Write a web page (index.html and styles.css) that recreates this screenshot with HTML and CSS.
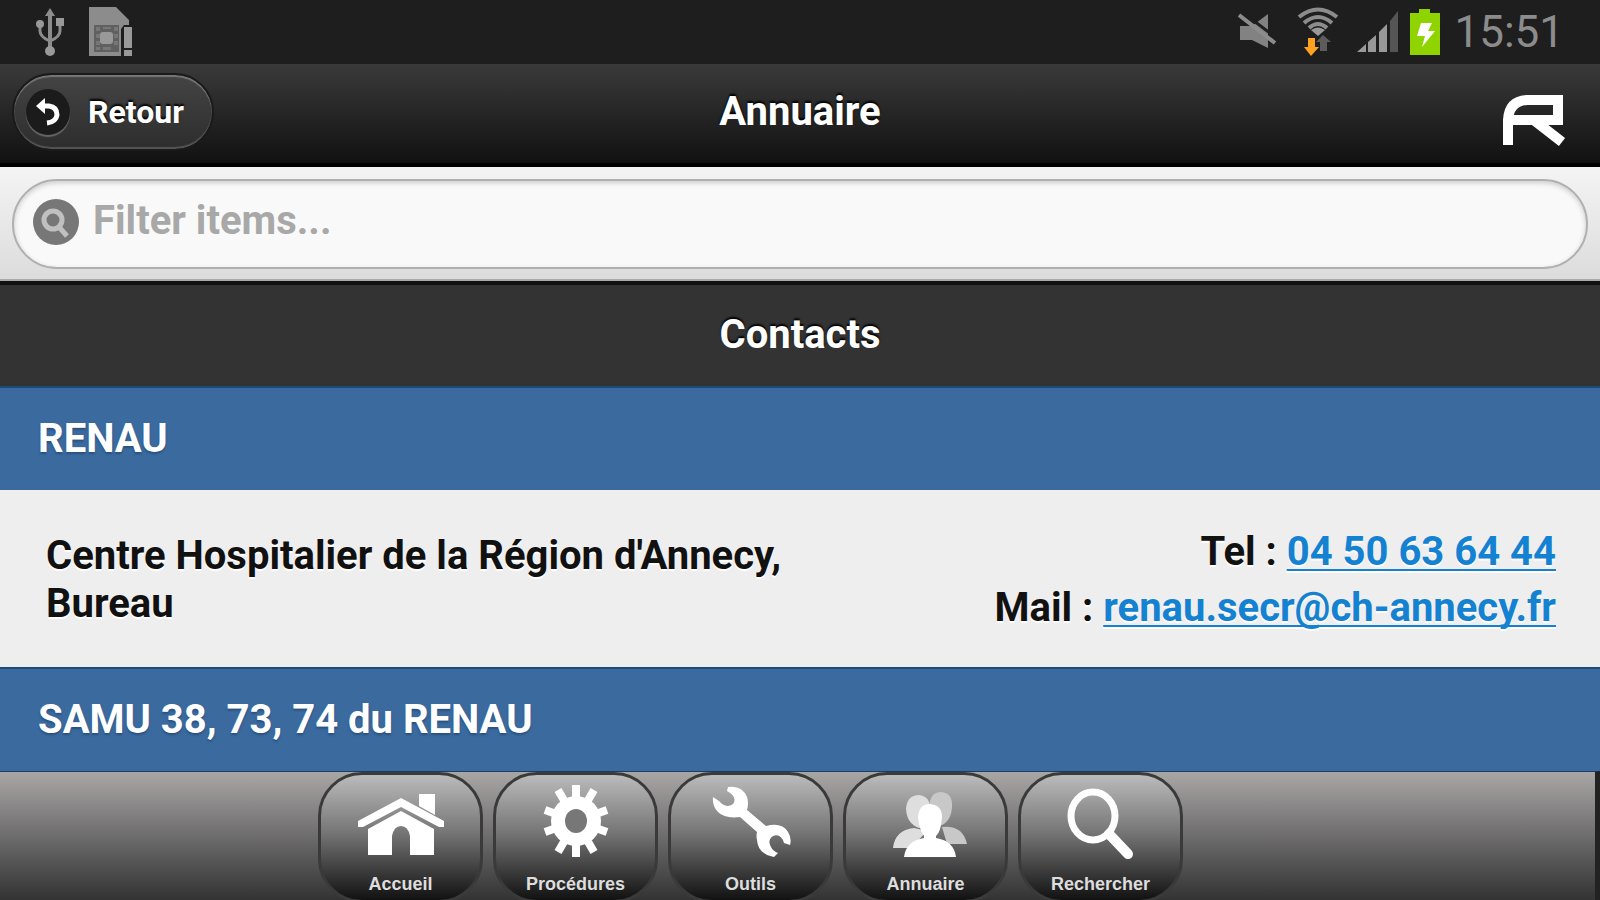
FILE: index.html
```html
<!DOCTYPE html>
<html lang="fr">
<head>
  <meta charset="UTF-8">
  <meta name="viewport" content="width=device-width, initial-scale=1.0">
  <title>Annuaire</title>
  <link rel="stylesheet" href="styles.css">
</head>
<body>
  <div class="status-bar">
    <div class="status-group">
      <svg class="icon-usb" width="32" height="50" viewBox="0 0 32 50" fill="none" stroke="#8c8c8c" stroke-width="3">
        <path d="M16 8V42" stroke-width="4"/>
        <path d="M6 18V24Q6 30 16 34Q26 30 26 24V16"/>
        <path d="M11 9L16 1L21 9Z" fill="#8c8c8c" stroke="none"/>
        <circle cx="6" cy="17" r="4" fill="#999" stroke="none"/>
        <path d="M22 11H30V19H22Z" fill="#999" stroke="none"/>
        <circle cx="16" cy="44" r="5" fill="#999" stroke="none"/>
      </svg>
      <svg class="icon-sim" width="44" height="50" viewBox="0 0 44 50">
        <path d="M0 0H27L40 13V18H35L32 22V49H0Z" fill="#8c8c8c"/>
        <path d="M5 18H30V45H5Z" fill="#606060"/>
        <path d="M7 20H11V24H7ZM7 27H11V31H7ZM7 34H11V38H7ZM25 20H29V24H25ZM25 27H29V31H25ZM25 34H29V38H25ZM14 20H22V22H14ZM14 40H22V43H14ZM7 40H11V43H7Z" fill="#777"/>
        <rect x="11" y="25" width="13" height="12" rx="3" fill="#999"/>
        <path d="M35 20H43V41H35ZM35 43H43V49H35Z" fill="#999"/>
      </svg>
    </div>
    <div class="status-group">
      <svg class="icon-mute" width="40" height="38" viewBox="0 0 40 38">
        <path d="M2 13H14L30 1V35L14 27H2Z" fill="#828282"/>
        <path d="M3 -2L41 27" stroke="#1e1e1e" stroke-width="3"/>
        <path d="M1 2L37 30" stroke="#8c8c8c" stroke-width="4"/>
      </svg>
      <svg class="icon-wifi" width="42" height="50" viewBox="0 0 42 50" fill="none" stroke="#8c8c8c" stroke-width="4">
        <path d="M2 10Q21 -5 40 10"/>
        <path d="M7 16Q21 4 35 16"/>
        <path d="M12 21Q21 13 30 21"/>
        <path d="M14 23Q21 18 28 23L21 29Z" fill="#999" stroke="none"/>
        <path d="M11 31H18V40H22L14 49L7 40H11Z" fill="#ffa21f" stroke="none"/>
        <path d="M23 44V35H19L26 28L34 35H30V44Z" fill="#5c5c5c" stroke="none"/>
      </svg>
      <svg class="icon-signal" width="43" height="42" viewBox="0 0 43 42" fill="#999">
        <path d="M0 41L9 33V41ZM11 31L19 24V41H11ZM22 21L30 13V41H22Z"/>
        <path d="M33 10L41 0V41H33Z" fill="#555"/>
      </svg>
      <svg class="icon-battery" width="30" height="46" viewBox="0 0 30 46">
        <path d="M9 0H20V4H30V46H0V4H9Z" fill="#8fd400"/>
        <path d="M11 14H22L18 22H25L12 38L15 27H7Z" fill="#fff"/>
      </svg>
      <span class="clock">15:51</span>
    </div>
  </div>

  <header class="header">
    <button type="button" class="back-button">
      <span class="back-icon">
        <svg width="24" height="28" viewBox="0 0 24 28" fill="none" stroke="#fff" stroke-width="5">
          <path d="M6 8H13Q21 9 21 17Q20 24 11 25"/>
          <path d="M0 8L9 0V16Z" fill="#fff" stroke="none"/>
        </svg>
      </span>
      Retour
    </button>
    <h1>Annuaire</h1>
    <svg class="logo" width="64" height="54" viewBox="0 0 64 54" fill="none" stroke="#fff" stroke-width="10">
      <path d="M6 52V27Q7 8 25 7H56V27H8"/>
      <path d="M33 28L60 49"/>
    </svg>
  </header>

  <form class="search-bar">
    <label class="search-field">
      <svg width="46" height="46" viewBox="0 0 46 46" fill="none">
        <circle cx="23" cy="23" r="23" fill="#777"/>
        <circle cx="20" cy="21" r="9" stroke="#c0c0c0" stroke-width="5"/>
        <path d="M26 28L34 37" stroke="#c0c0c0" stroke-width="5"/>
      </svg>
      <input type="search" placeholder="Filter items..." aria-label="Filter items">
    </label>
  </form>

  <main class="directory">
    <h2 class="title">Contacts</h2>
    <h3 class="divider">RENAU</h3>
    <div class="contact">
      <p class="contact-name">Centre Hospitalier de la Région d'Annecy, Bureau</p>
      <div class="contact-links">
        <p>Tel : <a href="tel:0450636444">04 50 63 64 44</a></p>
        <p>Mail : <a href="mailto:renau.secr@ch-annecy.fr">renau.secr@ch-annecy.fr</a></p>
      </div>
    </div>
    <h3 class="divider">SAMU 38, 73, 74 du RENAU</h3>
  </main>

  <nav class="navbar">
    <a href="#accueil" class="nav-button">
      <svg width="90" height="80" viewBox="0 0 90 80" fill="#fff">
        <path d="M2 38L45 15L88 38V44H83L45 24L7 44H2Z"/>
        <path d="M63 11H79V32L63 23Z"/>
        <path d="M12 46L45 28L78 46V72H54V53Q52 43 45 43Q38 43 36 53V72H12Z"/>
      </svg>
      <span>Accueil</span>
    </a>
    <a href="#procedures" class="nav-button">
      <svg width="90" height="80" viewBox="0 0 90 80">
        <g stroke="#fff" stroke-width="8">
          <path d="M45 2V74M27 7L63 69M63 7L27 69M14 27L76 49M76 27L14 49"/>
        </g>
        <circle cx="45" cy="38" r="25" fill="#fff"/>
        <ellipse cx="45" cy="38" rx="11" ry="12" fill="#777"/>
      </svg>
      <span>Procédures</span>
    </a>
    <a href="#outils" class="nav-button">
      <svg width="90" height="80" viewBox="0 0 90 80" fill="#fff">
        <path d="M22 4Q36 2 41 14Q43 20 41 27L60 43Q76 39 82 49Q86 55 84 62L78 60Q75 50 67 53Q61 57 65 64Q67 68 72 70L68 74Q52 71 51 57Q50 53 51 49L34 34Q19 36 12 29Q6 23 7 14L13 18Q20 26 27 21Q32 14 21 8Z"/>
      </svg>
      <span>Outils</span>
    </a>
    <a href="#annuaire" class="nav-button">
      <svg width="90" height="80" viewBox="-4 0 90 80">
        <path d="M44 24Q45 9 56 9Q68 10 67 24Q66 39 55 43Q44 38 44 24ZM57 44Q78 42 82 61H62Z" fill="#c8c8c8"/>
        <path d="M21 26Q22 12 34 12Q46 13 45 28Q43 44 34 45Q22 41 21 26ZM8 65Q10 47 29 45L42 48L26 65Z" fill="#dedede"/>
        <path d="M33 34Q34 21 45 21Q57 22 57 34Q56 49 51 53V55Q69 58 71 74H19Q21 58 39 55V53Q34 46 33 34Z" fill="#fff"/>
      </svg>
      <span>Annuaire</span>
    </a>
    <a href="#rechercher" class="nav-button">
      <svg width="90" height="80" viewBox="0 0 90 80" fill="none" stroke="#fff">
        <ellipse cx="37" cy="33" rx="22" ry="24" stroke-width="7"/>
        <path d="M53 51L72 71" stroke-width="10" stroke-linecap="round"/>
      </svg>
      <span>Rechercher</span>
    </a>
  </nav>
</body>
</html>
```

FILE: styles.css
```css
* {
  box-sizing: border-box;
}
body {
  margin: 0;
  min-height: 100vh;
  background: #1e1e1e;
  font-family: Roboto, Arial, sans-serif;
  font-size: 40px;
  font-weight: 700;
}
h1, h2, h3, p {
  margin: 0;
  font-size: 40px;
}
svg {
  display: block;
  flex-shrink: 0;
}

/* Barre de statut */
.status-bar {
  display: flex;
  justify-content: space-between;
  height: 64px;
  padding: 0 36px 0 34px;
  background: #1e1e1e;
}
.status-group {
  display: flex;
  align-items: center;
}
.icon-sim {
  margin-left: 23px;
}
.icon-wifi {
  margin-left: 19px;
}
.icon-signal {
  margin-left: 18px;
}
.icon-battery {
  margin-left: 10px;
}
.clock {
  margin-left: 14px;
  color: #8c8c8c;
  font-size: 44px;
  font-weight: 400;
}

/* En-tête */
.header {
  display: grid;
  grid-template-columns: 1fr auto 1fr;
  align-items: center;
  height: 103px;
  padding: 0 12px 4px;
  border-bottom: 4px solid #000;
  background: linear-gradient(#3a3a3a, #111);
  color: #fff;
  text-shadow: 0 -2px 2px #000;
}
.back-button {
  display: flex;
  align-items: center;
  justify-self: start;
  gap: 18px;
  height: 78px;
  padding: 0 28px 0 12px;
  border: 2px solid #1a1a1a;
  border-radius: 39px;
  background: linear-gradient(#444, #2d2d2d);
  box-shadow: inset 0 2px 1px #777, inset 0 -2px 1px #555;
  color: #fff;
  font: 700 32px Roboto, Arial, sans-serif;
  text-shadow: 0 -2px 2px #000;
  cursor: pointer;
}
.back-icon {
  display: flex;
  align-items: center;
  justify-content: center;
  width: 44px;
  height: 46px;
  border-radius: 50%;
  background: #1b1b1b;
  box-shadow: 0 2px 1px #666;
}
.logo {
  justify-self: end;
  margin: 16px 22px 0 0;
}

/* Filtre */
.search-bar {
  height: 114px;
  padding: 12px;
  border-bottom: 2px solid #aaa;
  background: linear-gradient(#f4f4f4, #dcdcdc);
}
.search-field {
  display: flex;
  align-items: center;
  gap: 14px;
  height: 90px;
  padding: 0 20px 4px 19px;
  border: 2px solid #b0b0b0;
  border-radius: 45px;
  background: #f9f9f9;
  box-shadow: inset 0 2px 5px #ccc;
}
.search-field input {
  flex: 1;
  min-width: 0;
  padding: 0 0 4px;
  border: none;
  outline: none;
  background: none;
  color: #333;
  font: 700 40px Roboto, Arial, sans-serif;
}
.search-field input::placeholder {
  color: #a8a8a8;
}

/* Liste des contacts */
.title {
  padding: 27px 38px 28px;
  border-top: 4px solid #111;
  background: #333;
  color: #fff;
  line-height: 46px;
  text-align: center;
  text-shadow: 0 -2px 2px #000;
}
.divider {
  padding: 28px 38px;
  border-top: 2px solid #1d4a78;
  background: #3a6a9e;
  color: #fff;
  line-height: 46px;
  text-shadow: 0 2px 2px #2b5180;
}
.contact {
  display: flex;
  justify-content: space-between;
  padding: 34px 44px 31px 46px;
  background: #eee;
  color: #111;
  text-shadow: 0 2px 1px #fff;
}
.contact-name {
  flex: 0 1 50%;
  padding-top: 8px;
  line-height: 48px;
}
.contact-links {
  line-height: 56px;
  text-align: right;
}
.contact-links a {
  color: #1482d0;
  text-decoration-thickness: 2px;
  text-underline-offset: 4px;
  text-decoration-skip-ink: none;
}

/* Menu du bas */
.navbar {
  display: flex;
  gap: 10px;
  height: 129px;
  padding-left: 318px;
  border-top: 1px solid #1d3e63;
  border-right: 5px solid #222;
  background: linear-gradient(#a9a6a6, #333);
  overflow: hidden;
}
.nav-button {
  display: flex;
  flex-direction: column;
  align-items: center;
  width: 165px;
  height: 131px;
  padding-top: 8px;
  border: 3px solid #3a3a3a;
  border-radius: 44px;
  background: linear-gradient(#bbb, #777 45%, #111);
  color: #ddd;
  font: 700 18px/22px "Liberation Sans", Arial, sans-serif;
  text-decoration: none;
}
.nav-button span {
  margin-top: 10px;
}
```
